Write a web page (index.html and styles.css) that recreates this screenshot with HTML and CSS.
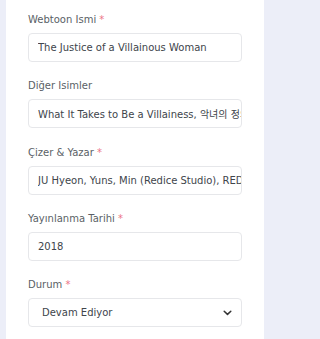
FILE: index.html
```html
<!DOCTYPE html>
<html lang="tr">
<head>
<meta charset="utf-8">
<link rel="stylesheet" href="styles.css">
</head>
<body>
<div class="card">
  <div class="field">
    <label class="label">Webtoon Ismi <span class="req">*</span></label>
    <input class="input" type="text" value="The Justice of a Villainous Woman">
  </div>
  <div class="field">
    <label class="label">Diğer Isimler</label>
    <input class="input" type="text" value="What It Takes to Be a Villainess, 악녀의 정의">
  </div>
  <div class="field">
    <label class="label">Çizer &amp; Yazar <span class="req">*</span></label>
    <input class="input" type="text" value="JU Hyeon, Yuns, Min (Redice Studio), REDICE">
  </div>
  <div class="field">
    <label class="label">Yayınlanma Tarihi <span class="req">*</span></label>
    <input class="input" type="text" value="2018">
  </div>
  <div class="field">
    <label class="label">Durum <span class="req">*</span></label>
    <div class="select">
      <span class="select-text">Devam Ediyor</span>
      <svg class="chev" width="9" height="6" viewBox="0 0 9 6"><path d="M1.2 1.2 L4.5 4.4 L7.8 1.2" fill="none" stroke="#333" stroke-width="1.5" stroke-linecap="round" stroke-linejoin="round"/></svg>
    </div>
  </div>
</div>
</body>
</html>
```

FILE: styles.css
```css
html, body {
  margin: 0;
  padding: 0;
  background: #eceef8;
  height: 100%;
  overflow: hidden;
}
body {
  width: 272px;
  font-family: "DejaVu Sans", "Noto Sans CJK KR", sans-serif;
}
.card {
  background: #ffffff;
  margin: 0 8px 0 6px;
  padding: 12px 22px 0 22px;
  height: 100%;
  box-sizing: border-box;
}
.field {
  display: flex;
  flex-direction: column;
  margin-bottom: 16.25px;
}
.label {
  display: block;
  height: 16px;
  line-height: 16px;
  font-size: 10px;
  color: #5a5f66;
  margin-bottom: 5px;
}
.req {
  color: #ec7486;
}
.input {
  display: block;
  box-sizing: border-box;
  width: 100%;
  height: 29px;
  margin: 0;
  border: 1px solid #e6e7ea;
  border-radius: 4px;
  padding: 0 0 0 9px;
  font-family: "DejaVu Sans", "Noto Sans CJK KR", sans-serif;
  font-size: 10px;
  color: #40454b;
  background: #fff;
  outline: none;
}
.select {
  box-sizing: border-box;
  height: 29px;
  border: 1px solid #e6e7ea;
  border-radius: 4px;
  display: flex;
  align-items: center;
  justify-content: space-between;
  padding: 0 9px 0 13px;
  font-size: 10px;
  color: #40454b;
}
.chev {
  display: block;
}
```
